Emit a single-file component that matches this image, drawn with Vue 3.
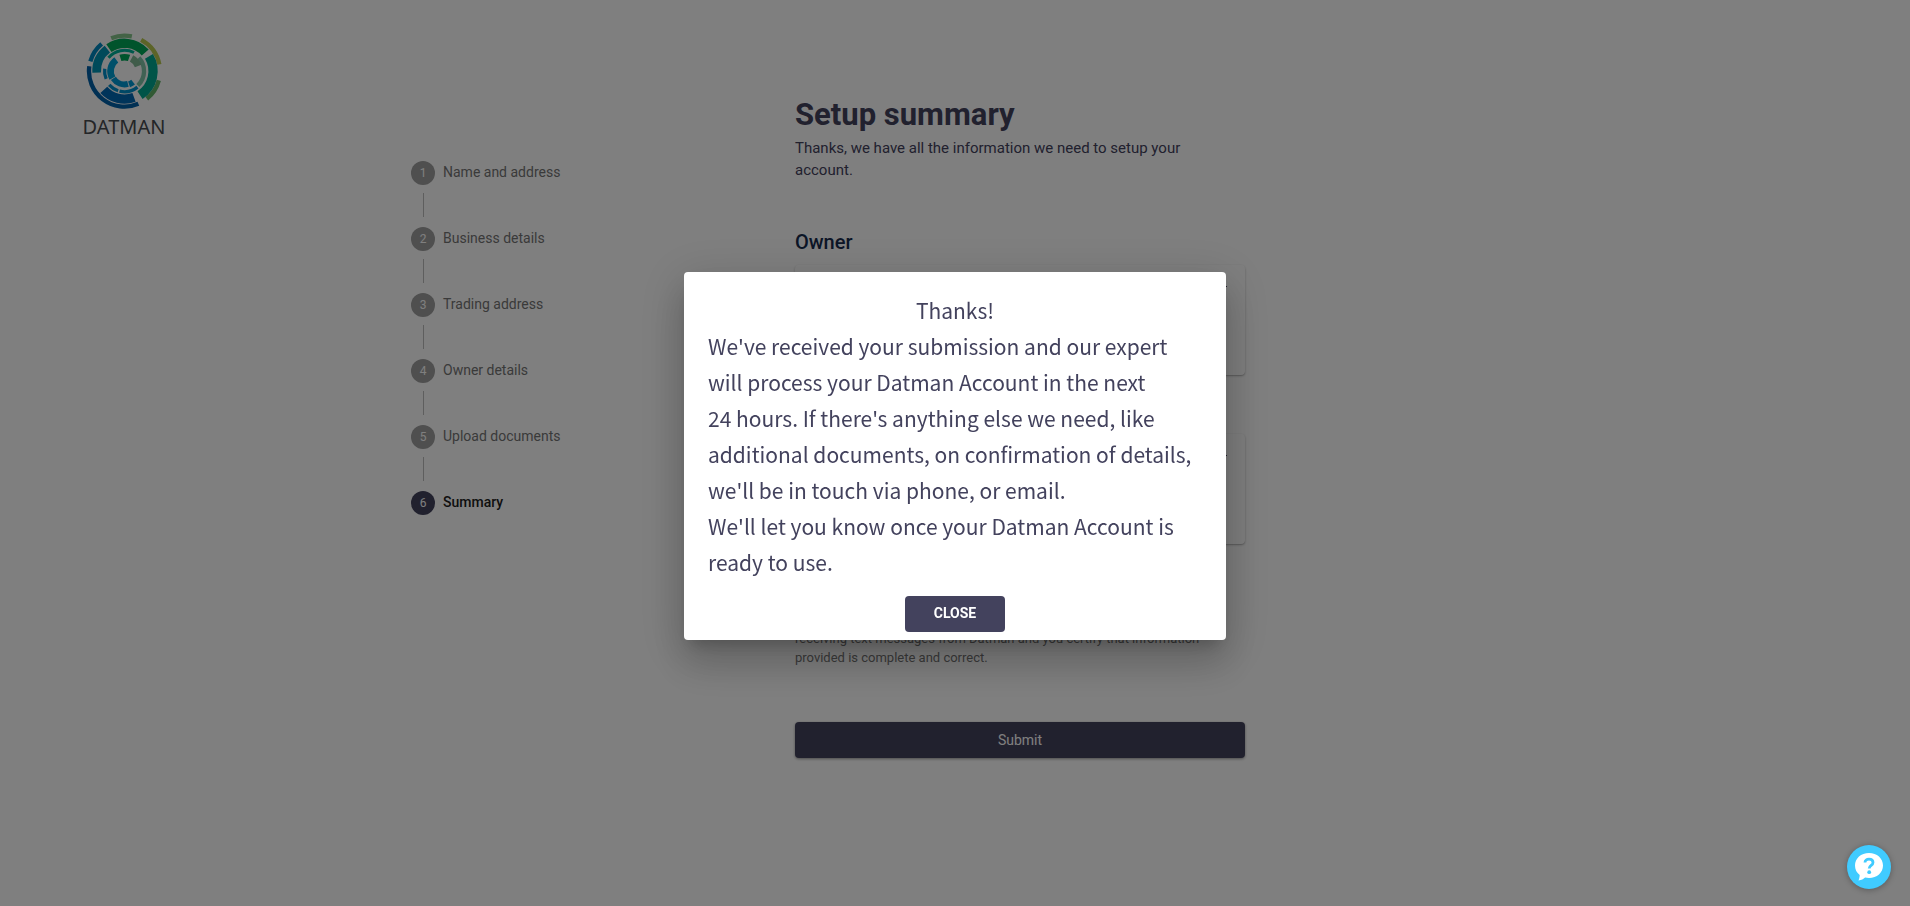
<template>
  <div class="page">
    <header class="brand">
      <svg class="brand-mark" viewBox="44 36 232 232" aria-hidden="true">
        <path
          v-for="(seg, i) in segments"
          :key="i"
          :d="arc(seg)"
          :stroke="seg.color"
          :stroke-width="seg.w"
          fill="none"
        />
      </svg>
      <span class="brand-name">DATMAN</span>
    </header>

    <main class="container">
      <ol class="stepper">
        <li
          v-for="(step, i) in steps"
          :key="step"
          class="step"
          :class="{ 'is-active': i === steps.length - 1 }"
        >
          <span class="step-icon">{{ i + 1 }}</span>
          <span class="step-label">{{ step }}</span>
        </li>
      </ol>

      <form class="summary" @submit.prevent="open = true">
        <h1 class="title">Setup summary</h1>
        <p class="subtitle">Thanks, we have all the information we need to setup your account.</p>

        <section v-for="name in sections" :key="name" class="section">
          <h2 class="section-title">{{ name }}</h2>
          <div class="card">
            <hr class="card-rule" />
          </div>
        </section>

        <p class="terms">
          By clicking Submit, you agree to our terms and conditions. You agree to<br />
          receiving text messages from Datman and you certify that information<br />
          provided is complete and correct.
        </p>
        <button type="submit" class="submit">Submit</button>
      </form>
    </main>

    <div v-if="open" class="overlay">
      <div class="dialog" role="dialog" aria-modal="true" aria-labelledby="dialog-title">
        <h2 id="dialog-title" class="dialog-title">Thanks!</h2>
        <p class="dialog-text">
          We've received your submission and our expert<br />
          will process your Datman Account in the next<br />
          24 hours. If there's anything else we need, like<br />
          additional documents, on confirmation of details,<br />
          we'll be in touch via phone, or email.<br />
          We'll let you know once your Datman Account is<br />
          ready to use.
        </p>
        <button type="button" class="close" @click="open = false">CLOSE</button>
      </div>
    </div>

    <button type="button" class="help" aria-label="Help">
      <svg viewBox="0 0 44 44" aria-hidden="true">
        <path
          d="M22 8C14 8 8 13.300 8 20.500c0 4 1.700 7.200 4.700 9.500-.1 2-.4 3.600-1.200 5.600 3-.5 5-1.600 6.600-3.100 1.300.3 2.500.5 3.900.5 8 0 14-5.300 14-12.500S30 8 22 8z"
          fill="#fff"
        />
        <path
          d="M18 17.600c0-2.300 1.700-3.500 4-3.500 2.400 0 4 1.300 4 3.300 0 3-3.800 3-3.800 6.200"
          fill="none"
          stroke="#40cbff"
          stroke-width="2.800"
        />
        <circle cx="22.200" cy="27.200" r="1.900" fill="#40cbff" />
      </svg>
    </button>
  </div>
</template>

<script setup>
import { ref } from 'vue'

const open = ref(true)

const steps = [
  'Name and address',
  'Business details',
  'Trading address',
  'Owner details',
  'Upload documents',
  'Summary'
]

const sections = ['Owner', 'Business']

// rings of the logo: radius, thickness, start and end angle (clockwise, 0 = right)
const segments = [
  { r: 107, w: 13, from: 67, to: 188, color: '#0060a8' },
  { r: 107, w: 13, from: 196, to: 230, color: '#0088c0' },
  { r: 107, w: 13, from: 248, to: 282, color: '#86c68c' },
  { r: 107, w: 13, from: 298, to: 349, color: '#b8c850' },
  { r: 107, w: 13, from: 15, to: 51, color: '#62b468' },
  { r: 84, w: 28, from: 236, to: 318, color: '#00a858' },
  { r: 86, w: 28, from: 329, to: 57, color: '#00a890' },
  { r: 84, w: 28, from: 70, to: 138, color: '#0068b4' },
  { r: 84, w: 26, from: 177, to: 232, color: '#0094b4' },
  { r: 63, w: 9, from: 220, to: 297, color: '#00b098' },
  { r: 59, w: 13, from: 317, to: 47, color: '#80c4a8' },
  { r: 62, w: 10, from: 51, to: 104, color: '#0090cc' },
  { r: 62, w: 10, from: 108, to: 138, color: '#0090cc' },
  { r: 60, w: 10, from: 157, to: 187, color: '#0090cc' },
  { r: 42, w: 20, from: 253, to: 289, color: '#00a858' },
  { r: 44, w: 21, from: 299, to: 339, color: '#80b894' },
  { r: 42, w: 20, from: 150, to: 234, color: '#00a0d4' },
  { r: 40, w: 18, from: 75, to: 147, color: '#0098d4' },
  { r: 42, w: 18, from: 52, to: 71, color: '#0098d4' }
]

function arc({ r, from, to }) {
  const point = (deg) => {
    const a = (deg * Math.PI) / 180
    return `${(160 + r * Math.cos(a)).toFixed(1)} ${(154 + r * Math.sin(a)).toFixed(1)}`
  }
  return `M${point(from)} A${r} ${r} 0 0 1 ${point(to)}`
}
</script>

<style>
body {
  margin: 0;
  background: #fff;
}
</style>

<style scoped>
.page {
  position: relative;
  box-sizing: border-box;
  min-height: 100vh;
  font-family: Roboto, 'Liberation Sans', sans-serif;
  color: #43425d;
}

.brand {
  position: absolute;
  top: 32px;
  left: 79px;
  display: flex;
  flex-direction: column;
  align-items: center;
  width: 90px;
}

.brand-mark {
  width: 77px;
  height: 77px;
}

.brand-name {
  margin-top: 4px;
  font-family: 'Noto Sans', sans-serif;
  font-size: 20px;
  line-height: 28px;
  color: #484c50;
}

.container {
  display: grid;
  grid-template-columns: 384px 450px;
  box-sizing: border-box;
  max-width: 1152px;
  margin: 0 auto;
  padding: 95px 32px 0;
}

.stepper {
  display: flex;
  flex-direction: column;
  gap: 42px;
  margin: 66px 0 0;
  padding: 0;
  list-style: none;
}

.step {
  position: relative;
  display: flex;
  align-items: center;
  gap: 8px;
  height: 24px;
}

.step:not(:last-child)::after {
  content: '';
  position: absolute;
  top: 32px;
  left: 12px;
  height: 24px;
  border-left: 1px solid #bdbdbd;
}

.step-icon {
  width: 24px;
  border-radius: 50%;
  background: #9e9e9e;
  color: #fff;
  font-size: 12px;
  line-height: 24px;
  text-align: center;
}

.step-label {
  padding-bottom: 2px;
  font-size: 14px;
  line-height: 20px;
  color: #757575;
}

.is-active .step-icon {
  background: #43425d;
}

.is-active .step-label {
  font-weight: 500;
  color: #212121;
}

.title {
  margin: 0;
  font-size: 31px;
  font-weight: 700;
  line-height: 40px;
}

.subtitle {
  max-width: 420px;
  margin: 2px 0 49px;
  font-size: 15px;
  line-height: 22px;
}

.section {
  margin-bottom: 24px;
}

.section-title {
  margin: 0 0 11px;
  font-size: 20px;
  font-weight: 500;
  line-height: 24px;
  color: #172b4d;
}

.card {
  box-sizing: border-box;
  height: 110px;
  padding: 21px 18px;
  border-radius: 4px;
  background: #fff;
  box-shadow: 0 1px 3px rgba(0, 0, 0, 0.2), 0 1px 1px rgba(0, 0, 0, 0.14);
}

.card-rule {
  margin: 0;
  border: 0;
  border-top: 1px solid #43425d;
}

.section + .section {
  margin-bottom: 0;
}

.terms {
  margin: 66px 0 55px;
  font-size: 13px;
  line-height: 19px;
  color: #757575;
}

.submit {
  width: 100%;
  height: 36px;
  border: 0;
  border-radius: 4px;
  background: #43425d;
  box-shadow: 0 1px 3px rgba(0, 0, 0, 0.4);
  color: #fff;
  font-family: inherit;
  font-size: 14px;
  cursor: pointer;
}

.overlay {
  position: fixed;
  inset: 0;
  display: flex;
  align-items: center;
  justify-content: center;
  padding-top: 6px;
  background: rgba(0, 0, 0, 0.5);
}

.dialog {
  display: flex;
  flex-direction: column;
  box-sizing: border-box;
  width: 542px;
  padding: 20px 24px 8px;
  border-radius: 4px;
  background: #fff;
  box-shadow: 0 11px 15px -7px rgba(0, 0, 0, 0.2), 0 24px 38px 3px rgba(0, 0, 0, 0.14),
    0 9px 46px 8px rgba(0, 0, 0, 0.12);
}

.dialog-title,
.dialog-text {
  margin: 0;
  font-family: 'Noto Sans CJK SC', sans-serif;
  font-size: 21px;
  font-weight: 400;
  line-height: 36px;
}

.dialog-title {
  text-align: center;
}

.close {
  align-self: center;
  width: 100px;
  height: 36px;
  margin-top: 16px;
  padding: 0 0 2px;
  border: 0;
  border-radius: 4px;
  background: #43425d;
  color: #fff;
  font-family: inherit;
  font-size: 14px;
  font-weight: 700;
  cursor: pointer;
}

.help {
  position: fixed;
  right: 19px;
  bottom: 17px;
  width: 44px;
  height: 44px;
  padding: 0;
  border: 0;
  border-radius: 50%;
  background: #40cbff;
  box-shadow: 0 1px 6px rgba(0, 0, 0, 0.3);
  cursor: pointer;
}

.help svg {
  display: block;
  width: 44px;
  height: 44px;
}
</style>
